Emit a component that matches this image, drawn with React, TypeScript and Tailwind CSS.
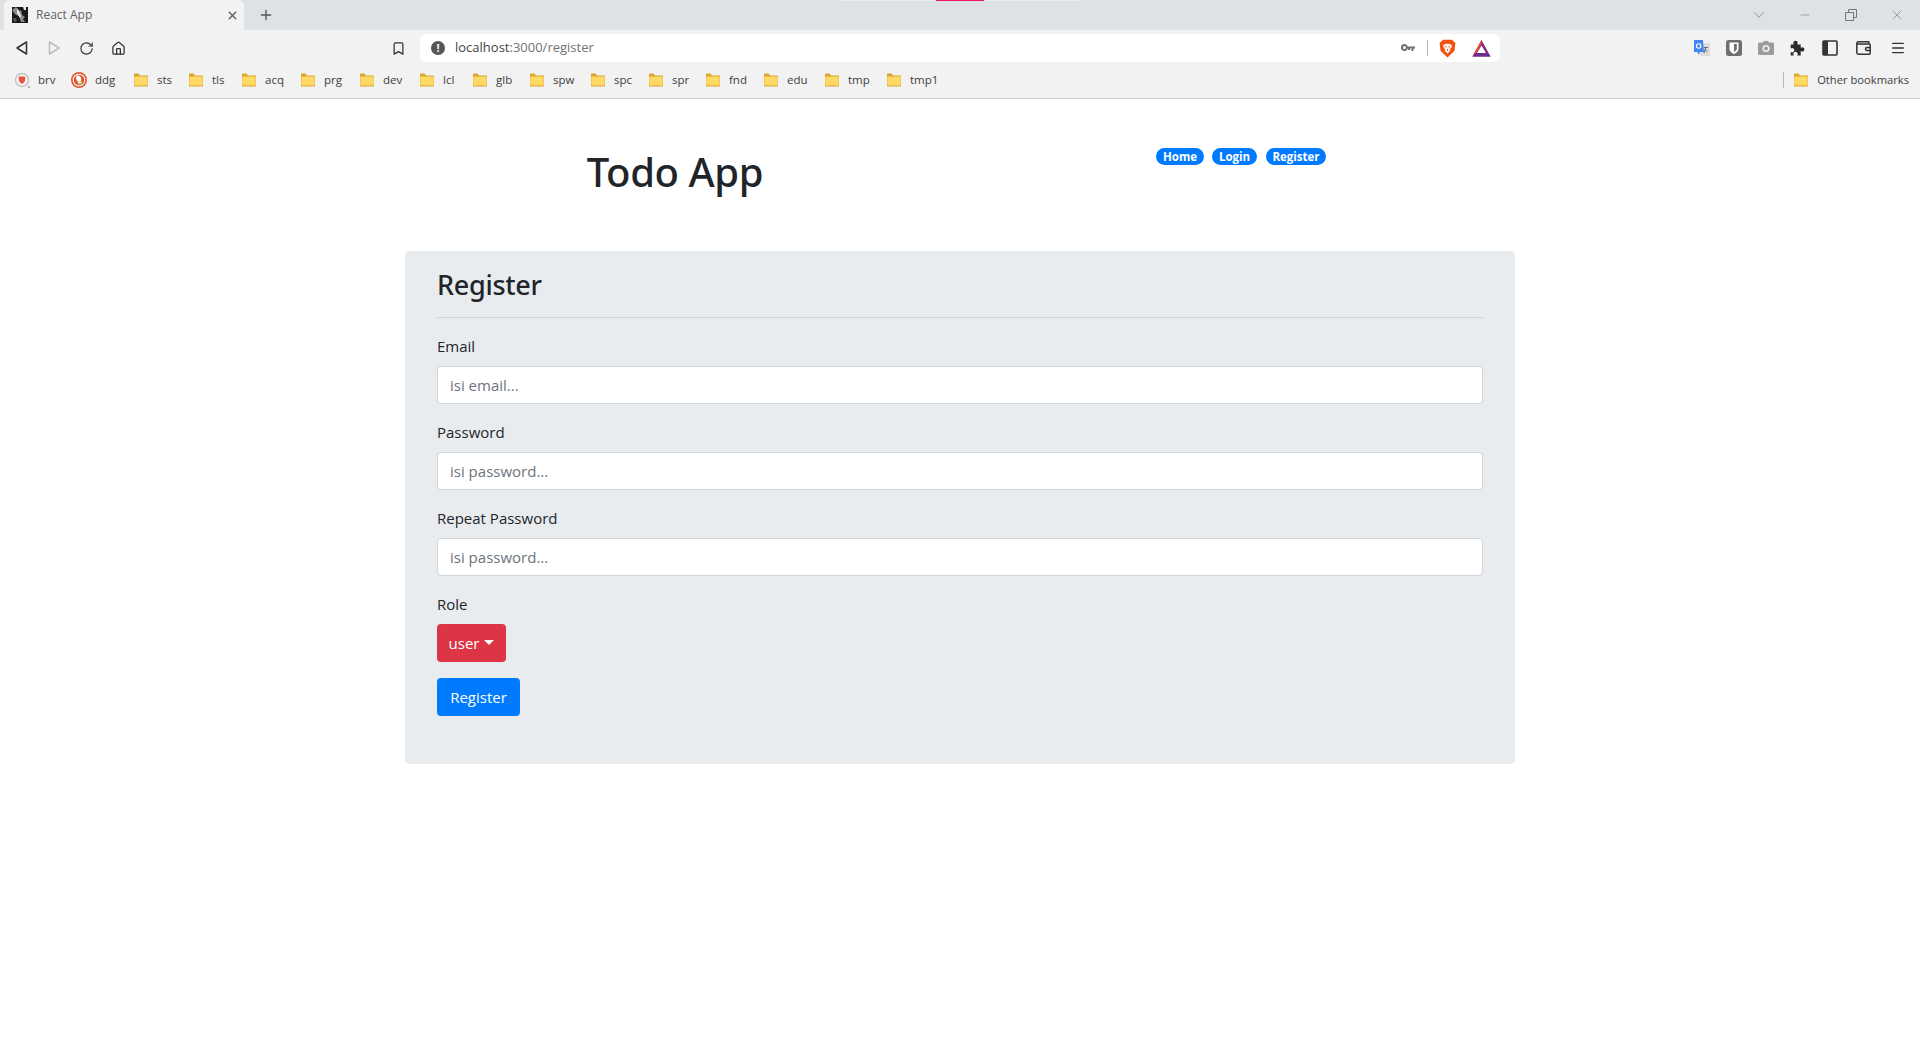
import { ChevronDown, Minus, X, Plus, RotateCw, Home, Bookmark, Menu } from "lucide-react";

const font = "font-['Open_Sans','Noto_Sans',sans-serif]";

const bookmarks = [
  { label: "sts", w: "w-[55px]" },
  { label: "tls", w: "w-[53px]" },
  { label: "acq", w: "w-[59px]" },
  { label: "prg", w: "w-[59px]" },
  { label: "dev", w: "w-[60px]" },
  { label: "lcl", w: "w-[53px]" },
  { label: "glb", w: "w-[57px]" },
  { label: "spw", w: "w-[61px]" },
  { label: "spc", w: "w-[58px]" },
  { label: "spr", w: "w-[57px]" },
  { label: "fnd", w: "w-[58px]" },
  { label: "edu", w: "w-[61px]" },
  { label: "tmp", w: "w-[62px]" },
  { label: "tmp1", w: "w-[60px]" },
];

const FolderIcon = () => (
  <svg width="16" height="14" viewBox="0 0 16 14" className="shrink-0">
    <path d="M1 1.500C1 .9 1.400.5 2 .5h3.500l1.500 2h7c.6 0 1 .4 1 1v9c0 .6-.4 1-1 1H2c-.6 0-1-.4-1-1z" fill="#d9a52e" />
    <path d="M1.800 3.600h12.400c.3 0 .5.2.5.5v7.600c0 .4-.3.7-.7.7H2c-.4 0-.7-.3-.7-.7V4.100c0-.3.2-.5.5-.5z" fill="#ffd966" />
  </svg>
);

const BraveBookmark = () => (
  <svg width="16" height="16" viewBox="0 0 16 16" className="shrink-0">
    <circle cx="8" cy="8" r="6.500" fill="#f5f5f5" stroke="#c4c4c4" strokeWidth="1.500" />
    <path d="M5.500 4.500h5l1 1.300-.8 4L8 12 5.300 9.800l-.8-4z" fill="#e8553a" />
    <circle cx="15" cy="15" r="1" fill="#9a9a9a" />
  </svg>
);

const DuckIcon = () => (
  <svg width="16" height="16" viewBox="0 0 16 16" className="shrink-0">
    <circle cx="8" cy="8" r="8" fill="#de5833" />
    <circle cx="8" cy="8" r="6.300" fill="#fff" />
    <circle cx="8" cy="8" r="5.300" fill="#de5833" />
    <path d="M5.500 3.800c2-.8 4 .2 4.500 2.500l.5 6-2 1.500-1.500-3.500L5 6.500z" fill="#fff" />
    <path d="M7.500 9.500l3-.8v1.600l-3-.2z" fill="#f5b82e" />
    <path d="M8 11.500l2.500-.5-.5 2-2 .5z" fill="#65bc46" />
  </svg>
);

const ReactFavicon = () => (
  <svg width="16" height="16" viewBox="0 0 16 16" className="shrink-0">
    <rect width="16" height="16" fill="#1a1a1a" />
    <path d="M0 3l4-3 3 4 2-1 1 5 3 2-2 2 2 3H9L7 9 4 8 2 6z" fill="#8a8a8a" />
    <path d="M5 1l2 3 2 5-1 2-3-5zM11 0h3v3h-2z" fill="#e8e8e8" />
    <path d="M1 11h3l1 3-3 1z" fill="#555" />
  </svg>
);

const BraveShield = () => (
  <svg width="17" height="19" viewBox="0 0 17 19">
    <path d="M4 .8h9l2 2 1.400 1-.9 8L8.500 18.500 1.500 11.800.6 3.800 2 2.800z" fill="#f1500f" />
    <path d="M5 5.500l2-.8h3l2 .8 1 1-.8 2.500-1.500 1.500.8 1-3 3-3-3 .8-1L4.800 9 4 6.500z" fill="#fff" opacity="0.92" />
    <path d="M6 7.500l1.500.5M11 7.500L9.500 8M8.500 10v2" stroke="#f1500f" strokeWidth="0.9" />
  </svg>
);

const BatTriangle = () => (
  <svg width="19" height="17" viewBox="0 0 19 17">
    <path d="M9.500 0L18.500 16.500H.500z" fill="#7e2a82" />
    <path d="M9.500 0L.500 16.500 4 13.500 9.500 4z" fill="#f04e23" />
    <path d="M.500 16.500h18l-2.500-3.500H3z" fill="#6d2d8c" />
    <path d="M9.500 5.500L14 13H5z" fill="#fff" />
  </svg>
);

const TranslateIcon = () => (
  <svg width="16" height="17" viewBox="0 0 16 17">
    <rect x="6" y="3" width="10" height="13" fill="#dcdcdc" />
    <path d="M10 7.500h4M12 7l-2 6M10.500 9l3 3" stroke="#5a6b7c" strokeWidth="1" fill="none" />
    <path d="M0 0h9l1 12H6l-1.500 3-1-3H0z" fill="#4285f4" />
    <circle cx="4.700" cy="6" r="2.200" fill="none" stroke="#fff" strokeWidth="1.100" />
  </svg>
);

const BitwardenIcon = () => (
  <svg width="16" height="16" viewBox="0 0 16 16">
    <rect width="16" height="16" rx="2.500" fill="#6f6f6f" />
    <path d="M3.500 2.500h9v6.500c0 2.500-2.500 4-4.500 5-2-1-4.500-2.500-4.500-5z" fill="#fff" />
    <path d="M8 4v8c1.500-.8 2.800-1.800 2.800-3.200V4z" fill="#6f6f6f" />
  </svg>
);

const CameraIcon = () => (
  <svg width="16" height="14" viewBox="0 0 16 14">
    <path d="M5 1.500L6 0h4l1 1.500h3.500c.8 0 1.500.7 1.500 1.500v9.500c0 .8-.7 1.500-1.500 1.500h-13C.7 14 0 13.300 0 12.500V3c0-.8.7-1.500 1.500-1.500z" fill="#9c9c9c" />
    <circle cx="8" cy="7.500" r="3.600" fill="#f2f2f2" />
    <circle cx="8" cy="7.500" r="2" fill="#9c9c9c" />
  </svg>
);

const PuzzleIcon = () => (
  <svg width="16" height="16" viewBox="0 0 16 16">
    <path d="M2 4h3.200c-.4-.6-.6-1-.6-1.500C4.600 1.200 5.600.3 6.800.3s2.200.9 2.200 2.200c0 .5-.2.900-.6 1.500H12v3.200c.5-.3 1-.5 1.500-.5 1.200 0 2.200 1 2.200 2.200s-1 2.200-2.200 2.200c-.5 0-1-.2-1.500-.5V15H8.500c.3-.5.500-1 .5-1.500 0-1.200-1-2.200-2.200-2.200s-2.200 1-2.200 2.200c0 .5.200 1 .5 1.500H2v-3.600c.5.300 1 .5 1.400.5 1.200 0 2.200-1 2.200-2.200S4.600 7.500 3.400 7.500c-.4 0-.9.200-1.400.5z" fill="#2b2b2b" transform="translate(-1.300 .5)" />
  </svg>
);

const SidebarIcon = () => (
  <svg width="16" height="16" viewBox="0 0 16 16">
    <rect x="1" y="1" width="14" height="14" rx="1" fill="none" stroke="#333" strokeWidth="1.600" />
    <rect x="1" y="1" width="5" height="14" fill="#333" />
  </svg>
);

const WalletIcon = () => (
  <svg width="16" height="14" viewBox="0 0 16 14" fill="none" stroke="#333" strokeWidth="1.500">
    <path d="M13 3V1.500c0-.4-.3-.7-.7-.7H2.500C1.500.8.800 1.500.800 2.500v9c0 .9.700 1.700 1.700 1.700h10.800c.5 0 .9-.4.900-.9V4c0-.5-.4-.9-.9-.9H.800" />
    <path d="M15 6.500h-4c-1 0-1.500.6-1.500 1.500s.5 1.500 1.500 1.500h4" />
  </svg>
);

const ToolButton = ({ children }: { children: React.ReactNode }) => (
  <span className="w-8 h-8 flex items-center justify-center shrink-0">{children}</span>
);

const Field = ({ label, placeholder, type = "text" }: { label: string; placeholder: string; type?: string }) => (
  <div className="mb-4">
    <label className="block mb-2 text-[15px] leading-6 text-[#212529]">{label}</label>
    <input
      type={type}
      placeholder={placeholder}
      className="block w-full h-[38px] px-3 py-1.5 bg-white border border-[#ced4da] rounded text-[15px] placeholder:text-[#6c757d] outline-none"
    />
  </div>
);

const NavPill = ({ label, w }: { label: string; w: string }) => (
  <a className={`${w} h-[17px] flex items-center justify-center rounded-[10px] bg-[#007bff] text-white text-[11.5px] font-bold leading-none`}>{label}</a>
);

export default function App() {
  return (
    <div className={`relative min-h-[1040px] bg-white text-[#212529] ${font}`}>
      <header className="border-b border-[#d2d2d2] bg-[#f2f2f2]">
        {/* tab strip */}
        <div className="relative h-[30px] bg-[#dee1e6] flex items-end pl-1 text-[#5f6368]">
          <div className="w-[240px] h-[30px] bg-[#f2f2f2] rounded-t-md flex items-center pl-2 pr-[5px]">
            <ReactFavicon />
            <span className="ml-[8px] text-xs text-[#5f6368] flex-1">React App</span>
            <X size={13} strokeWidth={2.5} />
          </div>
          <div className="ml-[14px] h-[30px] flex items-center text-[#555]">
            <Plus size={16} strokeWidth={2} />
          </div>
          <div className="ml-auto h-[30px] flex items-center text-[#777]">
            <ChevronDown size={18} strokeWidth={1} className="mr-[30px]" />
            <Minus size={14} strokeWidth={1} className="mr-[33px]" />
            <svg width="12" height="12" viewBox="0 0 12 12" fill="none" stroke="#777" className="mr-[32px]">
              <path d="M.5 3.500h8v8h-8zM3.500 3V.5h8v8H9" />
            </svg>
            <X size={16} strokeWidth={1} className="mr-[15px]" />
          </div>
          <span className="absolute top-0 left-[840px] w-[240px] h-px bg-[#ececec]" />
          <span className="absolute top-0 left-[936px] w-[48px] h-px bg-[#f0145a]" />
        </div>

        {/* toolbar */}
        <div className="h-[34px] pt-[2px] flex items-center pl-[6px] pr-[6px]">
          <ToolButton>
            <svg width="12" height="14" viewBox="0 0 12 14" fill="none" stroke="#333" strokeWidth="1.500" strokeLinejoin="round"><path d="M10.500 1v12L1 7z" /></svg>
          </ToolButton>
          <ToolButton>
            <svg width="12" height="14" viewBox="0 0 12 14" fill="none" stroke="#bdbdbd" strokeWidth="1.500" strokeLinejoin="round"><path d="M1.500 1v12L11 7z" /></svg>
          </ToolButton>
          <ToolButton><RotateCw size={15} strokeWidth={1.800} color="#333" /></ToolButton>
          <ToolButton><Home size={15} strokeWidth={2} color="#333" /></ToolButton>
          <div className="w-[248px]" />
          <ToolButton><Bookmark size={15} strokeWidth={2} color="#333" /></ToolButton>
          <div className="w-[1080px] ml-[6px] h-7 bg-white rounded-md flex items-center">
            <span className="ml-[11px] w-[14px] h-[14px] rounded-full bg-[#555] text-white text-[11px] font-bold leading-[14px] text-center shrink-0">!</span>
            <span className="ml-[10px] text-[13px] text-[#6f7276]"><span className="text-[#444]">localhost</span>:3000/register</span>
            <div className="ml-auto flex items-center">
              <svg width="14" height="8" viewBox="0 0 14 8" fill="#6f6f6f">
                <path d="M3.500 0a3.500 3.500 0 0 1 3.300 2.500H14v2h-1.500V7h-2V4.500H9V6H7V4.500h-.2A3.500 3.500 0 1 1 3.500 0zm0 2a1.500 1.500 0 1 0 0 3 1.500 1.500 0 0 0 0-3z" />
              </svg>
              <span className="ml-[12px] w-px h-4 bg-[#b8b8b8]" />
              <span className="ml-[11px] flex"><BraveShield /></span>
              <span className="ml-[16px] mr-[9px] flex"><BatTriangle /></span>
            </div>
          </div>
          <div className="ml-auto flex items-center">
            <ToolButton><TranslateIcon /></ToolButton>
            <ToolButton><BitwardenIcon /></ToolButton>
            <ToolButton><CameraIcon /></ToolButton>
            <ToolButton><PuzzleIcon /></ToolButton>
            <ToolButton><SidebarIcon /></ToolButton>
            <span className="ml-[2px] flex"><ToolButton><WalletIcon /></ToolButton></span>
            <span className="ml-[2px] flex"><ToolButton><Menu size={16} strokeWidth={2} color="#333" /></ToolButton></span>
          </div>
        </div>

        {/* bookmarks bar */}
        <div className="h-[34px] pb-[2px] flex items-center pl-[14px] pr-[11px] text-[11.5px] text-[#3c4043]">
          <div className="w-[57px] flex items-center gap-2"><BraveBookmark /><span>brv</span></div>
          <div className="w-[62px] flex items-center gap-2"><DuckIcon /><span>ddg</span></div>
          {bookmarks.map((b) => (
            <div key={b.label} className={`${b.w} flex items-center gap-2`}>
              <FolderIcon />
              <span>{b.label}</span>
            </div>
          ))}
          <div className="ml-auto flex items-center">
            <span className="w-px h-4 bg-[#b8b8b8] mr-[9px]" />
            <div className="flex items-center gap-2">
              <FolderIcon />
              <span className="text-[11.2px]">Other bookmarks</span>
            </div>
          </div>
        </div>
      </header>

      <main className="w-[1140px] mx-auto">
        <div className="grid grid-cols-2 h-[152px]">
          <div className="pt-[49px] text-center">
            <h1 className="text-[40px] leading-[48px] font-medium font-['Noto_Sans',sans-serif] tracking-[-0.4px] text-[#212529]">Todo App</h1>
          </div>
          <div className="pt-[49px] pr-[8px] flex justify-center items-start">
            <NavPill label="Home" w="w-[48px]" />
            <span className="w-2" />
            <NavPill label="Login" w="w-[45px]" />
            <span className="w-[9px]" />
            <NavPill label="Register" w="w-[60px]" />
          </div>
        </div>

        <section className="mx-[15px] h-[513px] bg-[#e9ecef] rounded-[5px] pt-[17px] px-8">
          <h3 className="text-[27px] leading-[34px] font-medium font-['Noto_Sans',sans-serif] tracking-[-0.3px] pb-[15px] mb-[16px] border-b border-[#ced4da]">Register</h3>
          <Field label="Email" placeholder="isi email..." />
          <Field label="Password" placeholder="isi password..." type="password" />
          <Field label="Repeat Password" placeholder="isi password..." type="password" />
          <div className="mb-4">
            <label className="block mb-2 text-[15px] leading-6">Role</label>
            <button className="h-[38px] w-[69px] bg-[#dc3545] text-white rounded text-[15px] flex items-center justify-center gap-[5px]">
              user
              <span className="mt-[-2px] border-x-[5px] border-x-transparent border-t-[5px] border-t-white" />
            </button>
          </div>
          <button className="h-[38px] w-[83px] bg-[#007bff] text-white rounded text-[15px]">Register</button>
        </section>
      </main>
    </div>
  );
}
